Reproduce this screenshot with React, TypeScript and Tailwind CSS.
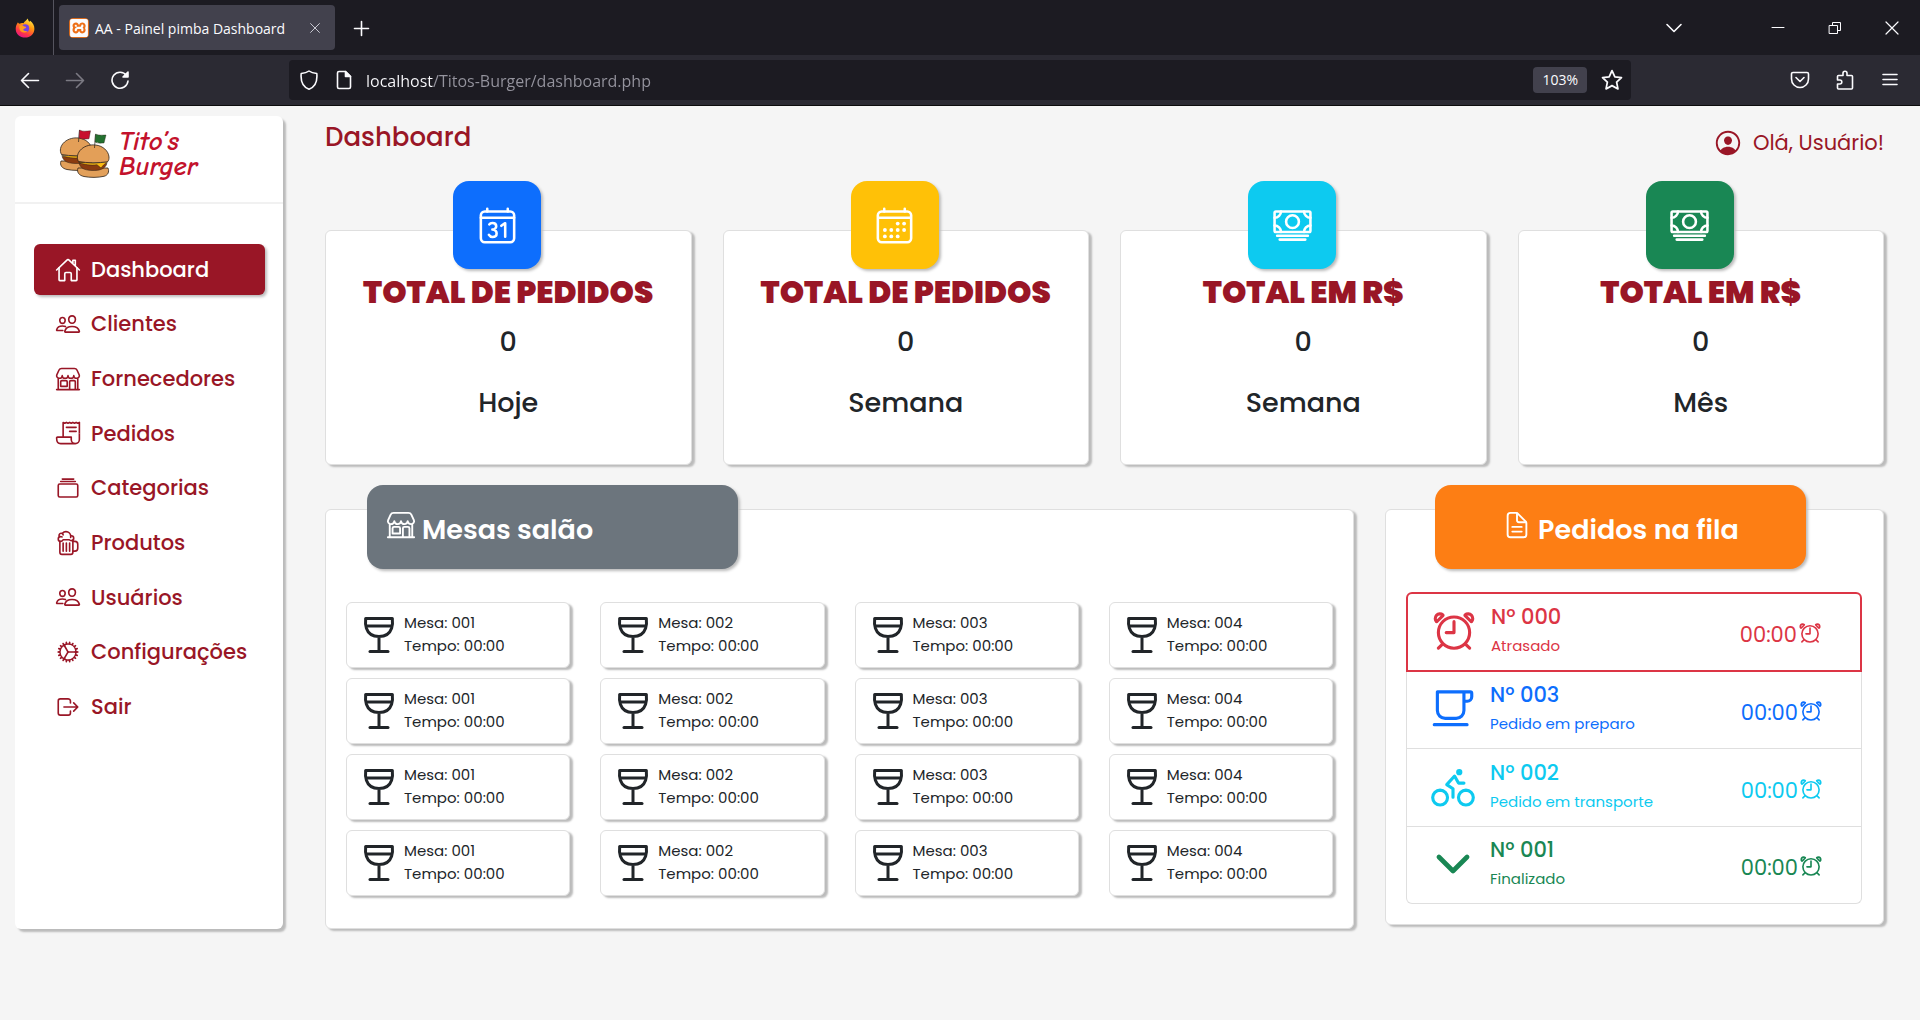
import React from "react";
import type { IconType } from "react-icons";
import {
  IoAlarmOutline,
  IoAlbumsOutline,
  IoBeerOutline,
  IoBicycleOutline,
  IoCafeOutline,
  IoCalendarNumberOutline,
  IoCalendarOutline,
  IoCashOutline,
  IoChevronDownOutline,
  IoCogOutline,
  IoDocumentTextOutline,
  IoHomeOutline,
  IoLogOutOutline,
  IoPeopleOutline,
  IoPersonCircleOutline,
  IoReceiptOutline,
  IoStorefrontOutline,
  IoWineOutline,
} from "react-icons/io5";
import { SiXampp } from "react-icons/si";

type StrokeProps = { className: string; children: React.ReactNode };

function Stroke({ className, children }: StrokeProps) {
  return (
    <svg
      viewBox="0 0 20 20"
      fill="none"
      stroke="currentColor"
      strokeWidth="1.6"
      strokeLinecap="round"
      strokeLinejoin="round"
      className={className}
      aria-hidden="true"
    >
      {children}
    </svg>
  );
}

function FirefoxLogo() {
  return (
    <svg viewBox="0 0 20 20" className="size-5" aria-hidden="true">
      <defs>
        <linearGradient id="flame" x1="0.8" y1="0" x2="0.3" y2="1">
          <stop offset="0" stopColor="#fff44f" />
          <stop offset="0.4" stopColor="#ff980e" />
          <stop offset="0.75" stopColor="#ff3647" />
          <stop offset="1" stopColor="#e31587" />
        </linearGradient>
      </defs>
      <path
        d="M3 4.2c.3 1 .8 1.400 1.600 1.500C6 4.900 7.500 4.900 8.500 5.300 9.200 3.500 11.500 2 12.800.4c.2 1.500 1 2.500 1.700 3.400.3-.3.500-.5.700-1 2.800 2 4.300 5 4.200 8.100-.1 5-4.200 8.700-9.300 8.700S.7 16 .7 10.900C.7 8 1.600 6 3 4.200z"
        fill="url(#flame)"
      />
      <circle cx="10.300" cy="10.200" r="3.900" fill="#7542e5" />
      <path d="M4.500 7.700c2-.8 3.700-.3 4.700.9 1 .1 1.800.3 1.900.8-.5 1.200-2.400 1-2.800 2 .3 1.400 2 2 4 1.500-1.500 1.900-4.600 2-6.300.5-1.300-1.100-2-3.400-1.500-5.700z" fill="#ff9a1f" />
    </svg>
  );
}

function BrowserTabs() {
  return (
    <div className="flex h-[55px] items-center bg-[#1c1b22] text-[#fbfbfe]">
      <div className="flex h-full w-[54px] items-center justify-center border-r border-[#55545e] pr-1">
        <FirefoxLogo />
      </div>
      <div className="ml-[5px] flex h-[45px] w-[276px] items-center rounded bg-[#42414d] px-[10px]">
        <span className="flex size-5 items-center justify-center rounded-sm border border-[#d96a1c] bg-[#ee6f18]">
          <SiXampp className="size-[18px]" />
        </span>
        <span className="ml-[6px] mt-0.5 whitespace-nowrap font-['Open_Sans',sans-serif] text-sm">AA - Painel pimba Dashboard</span>
        <button aria-label="Fechar aba" className="ml-auto mr-0.5 text-[#cfcfd8]">
          <Stroke className="size-4">
            <path d="M4.500 4.500l11 11M15.500 4.500l-11 11" strokeWidth="1.200" />
          </Stroke>
        </button>
      </div>
      <button aria-label="Nova aba" className="ml-4">
        <Stroke className="size-5">
          <path d="M10.500 3.500v14M3.500 10.500h14" />
        </Stroke>
      </button>
      <div className="ml-auto flex items-center">
        <button aria-label="Listar abas" className="mr-[84px]">
          <Stroke className="size-5">
            <path d="M3 6.500l7 7 7-7" />
          </Stroke>
        </button>
        <button aria-label="Minimizar" className="mr-[37px]">
          <Stroke className="size-5">
            <path d="M4 9.500h12" strokeWidth="1" />
          </Stroke>
        </button>
        <button aria-label="Restaurar" className="mr-[37px]">
          <Stroke className="size-5">
            <path d="M4.500 7.500h8v8h-8zM7.500 7.500v-3h8v8h-3" strokeWidth="1" />
          </Stroke>
        </button>
        <button aria-label="Fechar" className="mr-[18px]">
          <Stroke className="size-5">
            <path d="M4 4l12 12M16 4L4 16" strokeWidth="1.200" />
          </Stroke>
        </button>
      </div>
    </div>
  );
}

function BrowserToolbar() {
  return (
    <div className="flex h-[51px] items-center border-b border-[#0c0c0d] bg-[#2b2a33] text-[#fbfbfe]">
      <div className="flex w-[289px] shrink-0 items-center gap-[25px] pl-5">
        <button aria-label="Voltar">
          <Stroke className="size-5">
            <path d="M18.500 10.500h-17M8.500 3.500L1.500 10.500l7 7" />
          </Stroke>
        </button>
        <button aria-label="Avançar" className="text-[#7b7a83]">
          <Stroke className="size-5">
            <path d="M1.500 10.500h17M11.500 3.500l7 7-7 7" />
          </Stroke>
        </button>
        <button aria-label="Recarregar">
          <Stroke className="size-5">
            <path d="M16.500 5.500A8 8 0 1 0 18 11" />
            <path d="M18 2v5h-5z" fill="currentColor" />
          </Stroke>
        </button>
      </div>
      <div className="flex h-10 flex-1 items-center rounded bg-[#1c1b22] pl-[10px] pr-2">
        <Stroke className="size-5">
          <path d="M10 1c2 1.600 4.500 2.300 7.800 2.500C18.500 11 16 17 10 19.200 4 17 1.500 11 2.200 3.500 5.500 3.300 8 2.600 10 1z" />
        </Stroke>
        <Stroke className="ml-[15px] size-5">
          <path d="M5 1.500h6.500l5 5V17a1.500 1.500 0 0 1-1.500 1.500H5A1.500 1.500 0 0 1 3.500 17V3A1.500 1.500 0 0 1 5 1.500z" />
          <path d="M11.500 1.500v5h5z" fill="currentColor" />
        </Stroke>
        <input
          aria-label="Endereço"
          defaultValue="localhost/Titos-Burger/dashboard.php"
          className="ml-3 mt-0.5 min-w-0 flex-1 bg-transparent bg-[linear-gradient(to_right,#fbfbfe_67px,#95949e_67px)] bg-clip-text font-['Open_Sans',sans-serif] text-base text-transparent outline-none"
        />
        <button className="mr-[14px] h-[26px] rounded bg-[#42414d] px-[9px] font-['Open_Sans',sans-serif] text-sm">103%</button>
        <button aria-label="Favoritar">
          <Stroke className="size-[22px]">
            <path d="M10 1.500l2.600 5.600 6 .7-4.400 4.200 1.200 6.100L10 15.100l-5.400 3 1.200-6.100L1.400 7.800l6-.7z" />
          </Stroke>
        </button>
      </div>
      <div className="flex w-[289px] shrink-0 items-center justify-end gap-[25px] pr-5">
        <button aria-label="Pocket">
          <Stroke className="size-5">
            <path d="M3 2.500h14a1.500 1.500 0 0 1 1.500 1.500v5a8.500 8.500 0 0 1-17 0V4A1.500 1.500 0 0 1 3 2.500z" />
            <path d="M6 7.500l4 4 4-4" />
          </Stroke>
        </button>
        <button aria-label="Extensões">
          <Stroke className="size-5">
            <path d="M2.500 6.500a1 1 0 0 1 1-1H8V3.300a2 2 0 0 1 4 0v2.200h4.500a1 1 0 0 1 1 1V18a1 1 0 0 1-1 1h-13a1 1 0 0 1-1-1v-4h2.300a2 2 0 0 0 0-4H2.500z" />
          </Stroke>
        </button>
        <button aria-label="Menu">
          <Stroke className="size-5">
            <path d="M3 4.500h14M3 9.500h14M3 14.500h14" />
          </Stroke>
        </button>
      </div>
    </div>
  );
}

function Burger({ x, y }: { x: number; y: number }) {
  return (
    <g transform={`translate(${x} ${y})`} stroke="#2b2118" strokeWidth="0.8" strokeLinejoin="round">
      <path d="M1 24c-1.500 4 1 7.500 6 8.500 6 1.200 14 1.200 20-.2 4-1 5.500-4.500 4-8.300z" fill="#e2a05a" />
      <path d="M2 19.500c2 4.500 4 6.500 13 7 8 .2 13-1.500 15-7z" fill="#8a3c10" strokeWidth="0.500" />
      <path d="M1.500 18c9 1.500 20 1.500 29.500-.5l-4.500 3.500-2.500 3-4-3.300C14 21.500 7 21 1.500 18z" fill="#fdbb12" strokeWidth="0.500" />
      <path d="M1.500 17.500C-.5 14 0 9 4.500 5 8.500 1.500 14 .5 18.500 1 26 1.800 31.500 7 32 13c.1 2-.2 3.600-1.500 4.800-9 1.200-20 1.400-29-.3z" fill="#e39f58" />
    </g>
  );
}

function Logo() {
  return (
    <a href="#inicio" className="flex h-[86px] items-start gap-2 pl-11 pt-[13px]">
      <svg viewBox="0 0 52 50" className="h-[50px] w-[52px]" aria-hidden="true">
        <Burger x={1} y={8} />
        <path d="M19.500 13l1-12" stroke="#2b2118" strokeWidth="0.700" />
        <path d="M20.500 1c3.500 2 7 1 11 .8l-1.500 8c-4 .3-7 .8-10-1z" fill="#c8102e" stroke="#2b2118" strokeWidth="0.400" />
        <Burger x={18} y={15} />
        <path d="M35.500 19l1-13.500" stroke="#2b2118" strokeWidth="0.700" />
        <path d="M36.500 5c3 1.500 6.500 1.200 10.500 1l-2 8c-3.500.2-6.500.5-9-1z" fill="#23702f" stroke="#2b2118" strokeWidth="0.400" />
      </svg>
      <span className="flex flex-col font-['Comic_Neue','Lato',sans-serif] text-[27px] font-bold italic leading-[25px] text-[#c3122c]">
        <span>Tito’s</span>
        <span>Burger</span>
      </span>
    </a>
  );
}

const menu: { label: string; icon: IconType }[] = [
  { label: "Dashboard", icon: IoHomeOutline },
  { label: "Clientes", icon: IoPeopleOutline },
  { label: "Fornecedores", icon: IoStorefrontOutline },
  { label: "Pedidos", icon: IoReceiptOutline },
  { label: "Categorias", icon: IoAlbumsOutline },
  { label: "Produtos", icon: IoBeerOutline },
  { label: "Usuários", icon: IoPeopleOutline },
  { label: "Configurações", icon: IoCogOutline },
  { label: "Sair", icon: IoLogOutOutline },
];

function Sidebar() {
  return (
    <aside className="flex h-[813px] w-[268px] shrink-0 flex-col rounded-md bg-white shadow-[3px_3px_2px_#bbb]">
      <Logo />
      <hr className="border-t-2 border-[#f1f1f1]" />
      <nav className="mt-10 flex h-[488px] flex-col justify-between pl-[19px] pr-[18px]">
        {menu.map(({ label, icon: Icon }, i) => (
          <a
            key={label}
            href="#menu"
            className={
              i === 0
                ? "flex h-[51px] items-center gap-[10px] rounded-md bg-[#991626] pl-[21px] text-[21px] font-medium text-white shadow-[2px_2px_3px_#bbb]"
                : "flex h-[51px] items-center gap-[10px] pl-[21px] text-[21px] font-medium text-[#991626]"
            }
          >
            <Icon className="size-[26px]" />
            {label}
          </a>
        ))}
      </nav>
    </aside>
  );
}

const totals: { title: string; value: number; period: string; icon: IconType; tone: string }[] = [
  { title: "TOTAL DE PEDIDOS", value: 0, period: "Hoje", icon: IoCalendarNumberOutline, tone: "bg-[#0d6efd]" },
  { title: "TOTAL DE PEDIDOS", value: 0, period: "Semana", icon: IoCalendarOutline, tone: "bg-[#ffc107]" },
  { title: "TOTAL EM R$", value: 0, period: "Semana", icon: IoCashOutline, tone: "bg-[#0dcaf0]" },
  { title: "TOTAL EM R$", value: 0, period: "Mês", icon: IoCashOutline, tone: "bg-[#198754]" },
];

function Totals() {
  return (
    <section className="mt-[73px] grid grid-cols-4 gap-[31px]">
      {totals.map(({ title, value, period, icon: Icon, tone }, i) => (
        <article
          key={i}
          className="relative flex h-[235px] flex-col items-center rounded-md border border-[#dfdfdf] bg-white pt-[41px] text-center shadow-[3px_2px_2px_#bbb]"
        >
          <div className={`absolute -top-[50px] left-1/2 -ml-[55px] flex size-[88px] items-center justify-center rounded-2xl text-white shadow-[2px_2px_3px_#bbb] ${tone}`}>
            <Icon className="size-[41px]" />
          </div>
          <h2 className="whitespace-nowrap text-[31px] font-black leading-10 text-[#991626]">{title}</h2>
          <p className="mt-[10px] text-[27px] font-medium leading-10">{value}</p>
          <p className="mt-[21px] text-[27px] font-medium leading-10">{period}</p>
        </article>
      ))}
    </section>
  );
}

const tables = ["001", "002", "003", "004"];

function Tables() {
  return (
    <section className="relative h-[420px] min-w-0 flex-1 rounded-md border border-[#dfdfdf] bg-white px-5 pt-[92px] shadow-[3px_2px_2px_#bbb]">
      <h2 className="absolute -top-[25px] left-[41px] flex h-[84px] w-[371px] items-center rounded-2xl bg-[#6c757d] pl-[19px] pt-1.5 text-[27px] font-semibold text-white shadow-[2px_2px_3px_#bbb]">
        <IoStorefrontOutline className="mb-2.5 mr-[6px] size-[30px]" />
        Mesas salão
      </h2>
      <div className="grid grid-cols-4 gap-x-[30px] gap-y-[10px]">
        {[0, 1, 2, 3].flatMap((row) =>
          tables.map((n) => (
            <article
              key={`${row}-${n}`}
              className="flex h-[66px] items-center gap-px rounded-md border border-[#dfdfdf] bg-white pl-2 shadow-[3px_2px_2px_#bbb]"
            >
              <IoWineOutline className="size-12 shrink-0" />
              <div className="whitespace-nowrap pb-0.5 text-[15px] leading-[23px]">
                <p>Mesa: {n}</p>
                <p>Tempo: 00:00</p>
              </div>
            </article>
          ))
        )}
      </div>
    </section>
  );
}

const queue: { n: string; status: string; icon: IconType; tone: string }[] = [
  { n: "000", status: "Atrasado", icon: IoAlarmOutline, tone: "h-20 rounded-t-md border-2 border-[#dc3545] text-[#dc3545]" },
  { n: "003", status: "Pedido em preparo", icon: IoCafeOutline, tone: "h-[77px] border-x border-b border-[#dfdfdf] text-[#0d6efd]" },
  { n: "002", status: "Pedido em transporte", icon: IoBicycleOutline, tone: "h-[78px] border-x border-b border-[#dfdfdf] text-[#0dcaf0]" },
  { n: "001", status: "Finalizado", icon: IoChevronDownOutline, tone: "h-[77px] rounded-b-md border-x border-b border-[#dfdfdf] text-[#198754]" },
];

function Queue() {
  return (
    <section className="relative h-[416px] w-[499px] shrink-0 rounded-md border border-[#dfdfdf] bg-white pl-5 pr-[21px] pt-[82px] shadow-[3px_2px_2px_#bbb]">
      <h2 className="absolute -top-[25px] left-[49px] flex h-[84px] w-[371px] items-center justify-center rounded-2xl bg-[#fd7e14] pt-1.5 text-[27px] font-semibold text-white shadow-[2px_2px_3px_#bbb]">
        <IoDocumentTextOutline className="mb-2.5 mr-[6px] size-[30px]" />
        Pedidos na fila
      </h2>
      <ul>
        {queue.map(({ n, status, icon: Icon, tone }) => (
          <li key={n} className={`flex items-center pb-0.5 pl-[21px] pr-[37px] ${tone}`}>
            <Icon className="size-[50px] shrink-0" />
            <div className="ml-3">
              <p className="text-[21px] font-medium leading-[30px]">Nº {n}</p>
              <p className="text-[15px] leading-7">{status}</p>
            </div>
            <p className="ml-auto flex items-center pt-2 text-[21px]">
              00:00
              <IoAlarmOutline className="mb-1 size-[26px]" />
            </p>
          </li>
        ))}
      </ul>
    </section>
  );
}

export default function App() {
  return (
    <div className="flex min-h-screen flex-col bg-[#f5f5f5]">
      <header>
        <BrowserTabs />
        <BrowserToolbar />
      </header>
      <div className="flex flex-1 gap-[42px] pl-[15px] pr-9 pt-[10px] font-['Poppins','Inter',sans-serif] text-[#212529]">
        <Sidebar />
        <main className="min-w-0 flex-1">
          <div className="mt-px flex h-10 items-center justify-between text-[#991626]">
            <h1 className="text-[26px] font-medium">Dashboard</h1>
            <a href="#usuario" className="mt-3 flex items-center gap-[10px] text-[21px]">
              <IoPersonCircleOutline className="size-[30px]" />
              Olá, Usuário!
            </a>
          </div>
          <Totals />
          <div className="mt-11 flex gap-[31px]">
            <Tables />
            <Queue />
          </div>
        </main>
      </div>
    </div>
  );
}
